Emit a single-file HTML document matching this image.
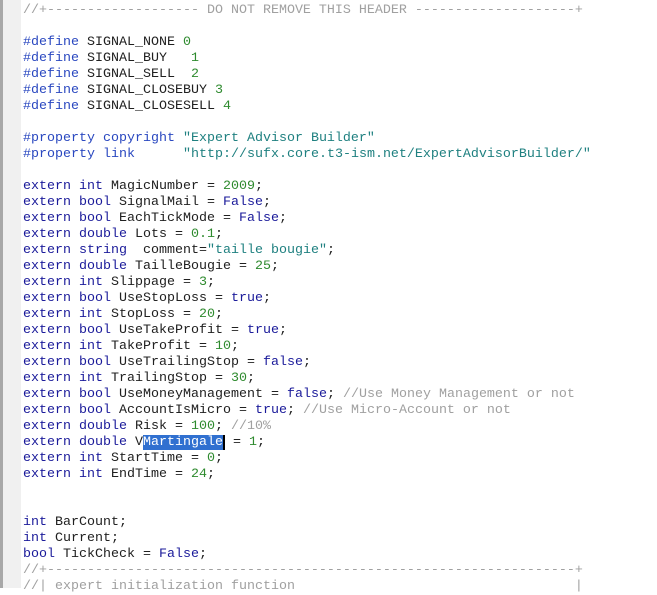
<!DOCTYPE html>
<html><head><style>
body{margin:0;width:657px;height:588px;overflow:hidden;background:#fff;position:relative}
.bd{position:absolute;left:0;top:0;width:3px;height:588px;background:#a8a8a8}
.gut{position:absolute;left:3px;top:0;width:18px;height:588px;background:#f0f0f0}
pre{position:absolute;left:23px;top:3px;margin:0;font-family:"Liberation Mono",monospace;font-size:13.33px;line-height:16px;color:#202020}
.k{color:#1a1a9a}.d{color:#2a48c0}.n{color:#2e8a2e}.s{color:#1f8080}.c{color:#a0a0a0}
.sel{background:#3070d0;color:#fff}
.cur{border-right:2px solid #000}
</style></head><body>
<div class="bd"></div><div class="gut"></div>
<pre><span class="c">//+------------------- DO NOT REMOVE THIS HEADER --------------------+</span>

<span class="d">#define</span> SIGNAL_NONE <span class="n">0</span>
<span class="d">#define</span> SIGNAL_BUY   <span class="n">1</span>
<span class="d">#define</span> SIGNAL_SELL  <span class="n">2</span>
<span class="d">#define</span> SIGNAL_CLOSEBUY <span class="n">3</span>
<span class="d">#define</span> SIGNAL_CLOSESELL <span class="n">4</span>

<span class="d">#property</span> <span class="d">copyright</span> <span class="s">"Expert Advisor Builder"</span>
<span class="d">#property</span> <span class="d">link</span>      <span class="s">"http://sufx.core.t3-ism.net/ExpertAdvisorBuilder/"</span>

<span class="k">extern</span> <span class="k">int</span> MagicNumber = <span class="n">2009</span>;
<span class="k">extern</span> <span class="k">bool</span> SignalMail = <span class="k">False</span>;
<span class="k">extern</span> <span class="k">bool</span> EachTickMode = <span class="k">False</span>;
<span class="k">extern</span> <span class="k">double</span> Lots = <span class="n">0.1</span>;
<span class="k">extern</span> <span class="k">string</span>  comment=<span class="s">"taille bougie"</span>;
<span class="k">extern</span> <span class="k">double</span> TailleBougie = <span class="n">25</span>;
<span class="k">extern</span> <span class="k">int</span> Slippage = <span class="n">3</span>;
<span class="k">extern</span> <span class="k">bool</span> UseStopLoss = <span class="k">true</span>;
<span class="k">extern</span> <span class="k">int</span> StopLoss = <span class="n">20</span>;
<span class="k">extern</span> <span class="k">bool</span> UseTakeProfit = <span class="k">true</span>;
<span class="k">extern</span> <span class="k">int</span> TakeProfit = <span class="n">10</span>;
<span class="k">extern</span> <span class="k">bool</span> UseTrailingStop = <span class="k">false</span>;
<span class="k">extern</span> <span class="k">int</span> TrailingStop = <span class="n">30</span>;
<span class="k">extern</span> <span class="k">bool</span> UseMoneyManagement = <span class="k">false</span>; <span class="c">//Use Money Management or not</span>
<span class="k">extern</span> <span class="k">bool</span> AccountIsMicro = <span class="k">true</span>; <span class="c">//Use Micro-Account or not</span>
<span class="k">extern</span> <span class="k">double</span> Risk = <span class="n">100</span>; <span class="c">//10%</span>
<span class="k">extern</span> <span class="k">double</span> V<span class="sel cur">Martingale</span> = <span class="n">1</span>;
<span class="k">extern</span> <span class="k">int</span> StartTime = <span class="n">0</span>;
<span class="k">extern</span> <span class="k">int</span> EndTime = <span class="n">24</span>;


<span class="k">int</span> BarCount;
<span class="k">int</span> Current;
<span class="k">bool</span> TickCheck = <span class="k">False</span>;
<span class="c">//+------------------------------------------------------------------+</span>
<span class="c">//| expert initialization function                                   |</span>
</pre>
</body></html>
